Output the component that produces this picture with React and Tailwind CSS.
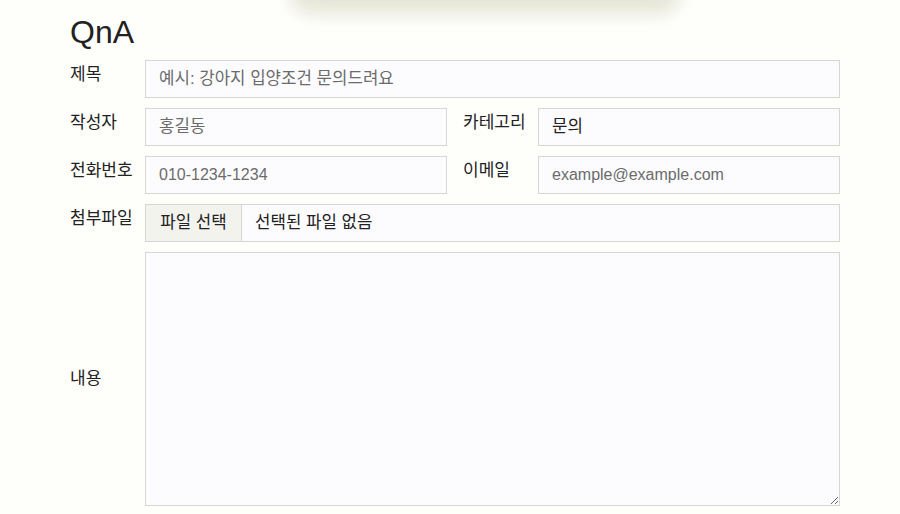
import { useState } from "react";

const FONT = { fontFamily: '"Liberation Sans", "Noto Sans CJK KR", sans-serif' };

function Label({ children, center }) {
  return (
    <div
      className={`w-[75px] shrink-0 text-[17px] leading-6 text-[#222] ${
        center ? "self-center" : "pt-[3px]"
      }`}
    >
      {children}
    </div>
  );
}

function Input({ placeholder, value, onChange, ko }) {
  return (
    <input
      value={value}
      onChange={onChange}
      placeholder={placeholder}
      className={`h-[38px] w-full min-w-0 flex-1 border border-[#d6d6d2] bg-[#fcfcfe] px-[13px] text-[#222] outline-none placeholder:text-[#6b6b6b] ${
        ko ? "text-[16.8px]" : "text-[16px]"
      }`}
      style={FONT}
    />
  );
}

export default function App() {
  const [title, setTitle] = useState("");
  const [writer, setWriter] = useState("");
  const [phone, setPhone] = useState("");
  const [email, setEmail] = useState("");
  const [category, setCategory] = useState("문의");
  const [content, setContent] = useState("");

  return (
    <div className="relative min-h-[514px] w-full overflow-hidden bg-[#fefefb]" style={FONT}>
      {/* top haze */}
      <div className="absolute left-[290px] top-[-28px] h-[42px] w-[390px] rounded-full bg-[#e6e6d8] blur-[8px]" />

      <main className="relative ml-[70px] w-[770px] pt-[14px]">
        <h1 className="mb-[9px] text-[32px] leading-[37px] text-[#222]">QnA</h1>

        <div className="flex flex-col gap-[10px]">
          <div className="flex">
            <Label>제목</Label>
            <Input
              ko
              placeholder="예시: 강아지 입양조건 문의드려요"
              value={title}
              onChange={(e) => setTitle(e.target.value)}
            />
          </div>

          <div className="flex">
            <Label>작성자</Label>
            <Input ko placeholder="홍길동" value={writer} onChange={(e) => setWriter(e.target.value)} />
            <div className="w-4 shrink-0" />
            <Label>카테고리</Label>
            <div className="flex h-[38px] flex-1 items-center border border-[#d6d6d2] bg-[#fcfcfe] px-[13px] text-[16.8px] text-[#222]">
              <select
                value={category}
                onChange={(e) => setCategory(e.target.value)}
                className="w-full appearance-none bg-transparent outline-none"
              >
                <option>문의</option>
                <option>입양</option>
                <option>기타</option>
              </select>
            </div>
          </div>

          <div className="flex">
            <Label>전화번호</Label>
            <Input placeholder="010-1234-1234" value={phone} onChange={(e) => setPhone(e.target.value)} />
            <div className="w-4 shrink-0" />
            <Label>이메일</Label>
            <Input
              placeholder="example@example.com"
              value={email}
              onChange={(e) => setEmail(e.target.value)}
            />
          </div>

          <div className="flex">
            <Label>첨부파일</Label>
            <label className="flex h-[38px] flex-1 cursor-pointer items-center border border-[#d6d6d2] bg-[#fcfcfe] text-[16.8px] text-[#222]">
              <span className="flex h-full w-[96px] items-center justify-center border-r border-[#d6d6d2] bg-[#f3f3ee]">
                파일 선택
              </span>
              <span className="pl-[13px]">선택된 파일 없음</span>
              <input type="file" className="hidden" />
            </label>
          </div>

          <div className="flex">
            <Label center>내용</Label>
            <textarea
              value={content}
              onChange={(e) => setContent(e.target.value)}
              className="h-[254px] flex-1 border border-[#d6d6d2] bg-[#fcfcfe] px-[13px] py-2 text-[16px] outline-none"
            />
          </div>
        </div>
      </main>
    </div>
  );
}
